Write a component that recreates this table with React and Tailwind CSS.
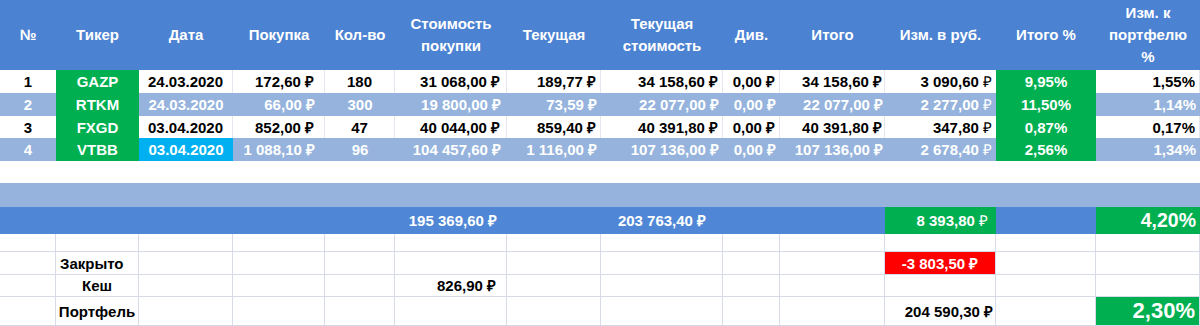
import React from 'react';

const grid =
  'grid grid-cols-[56px_83px_94px_92px_70px_112px_94px_122px_57px_105px_111px_100px_104px]';

const headers = [
  '№',
  'Тикер',
  'Дата',
  'Покупка',
  'Кол-во',
  'Стоимость\nпокупки',
  'Текущая',
  'Текущая\nстоимость',
  'Див.',
  'Итого',
  'Изм. в руб.',
  'Итого %',
  'Изм. к\nпортфелю\n%',
];

// alignment per column in the positions table
const align = [
  'justify-center',
  'justify-center',
  'justify-center',
  'justify-end pr-2.5',
  'justify-center',
  'justify-end pr-1.5',
  'justify-end pr-1',
  'justify-end pr-1',
  'justify-end pr-1',
  'justify-end pr-0.5',
  'justify-end pr-1',
  'justify-center',
  'justify-end pr-1',
];

const positions = [
  ['1', 'GAZP', '24.03.2020', '172,60 ₽', '180', '31 068,00 ₽', '189,77 ₽', '34 158,60 ₽', '0,00 ₽', '34 158,60 ₽', '3 090,60 ₽', '9,95%', '1,55%'],
  ['2', 'RTKM', '24.03.2020', '66,00 ₽', '300', '19 800,00 ₽', '73,59 ₽', '22 077,00 ₽', '0,00 ₽', '22 077,00 ₽', '2 277,00 ₽', '11,50%', '1,14%'],
  ['3', 'FXGD', '03.04.2020', '852,00 ₽', '47', '40 044,00 ₽', '859,40 ₽', '40 391,80 ₽', '0,00 ₽', '40 391,80 ₽', '347,80 ₽', '0,87%', '0,17%'],
  ['4', 'VTBB', '03.04.2020', '1 088,10 ₽', '96', '104 457,60 ₽', '1 116,00 ₽', '107 136,00 ₽', '0,00 ₽', '107 136,00 ₽', '2 678,40 ₽', '2,56%', '1,34%'],
];

const rowHeights = ['h-[23px]', 'h-[23px]', 'h-[22px]', 'h-[23px]'];

// ruble sign in the "Изм. в руб." column is drawn thinner
const ThinRub = ({ value }) => {
  const [num] = value.split(' ₽');
  return (
    <>
      {num}&nbsp;<span className="font-normal">₽</span>
    </>
  );
};

const PositionRow = ({ row, i }) => {
  const striped = i % 2 === 1;
  return (
    <div className={`${grid} ${rowHeights[i]} ${striped ? 'bg-[#95b3dc] text-white' : 'bg-white text-black'}`}>
      {row.map((val, c) => {
        let bg = '';
        if (c === 1 || c === 11) bg = 'bg-[#00b050] text-white';
        if (i === 3 && c === 2) bg = 'bg-[#00b0f0] text-white';
        const line = !striped && c !== 0 && c !== 1 && c !== 10 && c !== 11 ? 'border-r border-[#e3e6ee]' : '';
        return (
          <div key={c} className={`flex items-center whitespace-nowrap ${align[c]} ${bg} ${line}`}>
            {c === 10 ? <ThinRub value={val} /> : val}
          </div>
        );
      })}
    </div>
  );
};

const GridCell = ({ children, className = '' }) => (
  <div className={`flex items-center whitespace-nowrap border-r border-b border-[#d6dbe7] ${className}`}>
    {children}
  </div>
);

const BottomRow = ({ h, cells = {} }) => (
  <div className={`${grid} ${h} bg-white text-black`}>
    {headers.map((_, c) => (
      <GridCell key={c} className={cells[c]?.cls || ''}>
        {cells[c]?.text}
      </GridCell>
    ))}
  </div>
);

export default function App() {
  return (
    <div className="w-[1200px] h-[326px] overflow-hidden bg-white font-[family-name:Liberation_Sans,Arial,sans-serif] text-[15px] font-bold leading-none">
      <div className={`${grid} h-[70px] bg-[#4b82d2] text-white`}>
        {headers.map((h) => (
          <div key={h} className="flex items-center justify-center whitespace-pre-line text-center leading-[22px]">
            {h}
          </div>
        ))}
      </div>

      {positions.map((row, i) => (
        <PositionRow key={row[1]} row={row} i={i} />
      ))}

      <div className="h-[22px] bg-white" />
      <div className="h-[24px] bg-[#95b3dc]" />

      <div className={`${grid} h-[27px] bg-[#4f87d6] text-white`}>
        {headers.map((_, c) => {
          if (c === 5)
            return (
              <div key={c} className="flex items-center justify-end pr-2.5 whitespace-nowrap">
                195 369,60 ₽
              </div>
            );
          if (c === 7)
            return (
              <div key={c} className="flex items-center justify-center whitespace-nowrap">
                203 763,40 ₽
              </div>
            );
          if (c === 10)
            return (
              <div key={c} className="flex items-center justify-end pr-2 whitespace-nowrap bg-[#00b050]">
                <ThinRub value="8 393,80 ₽" />
              </div>
            );
          if (c === 12)
            return (
              <div key={c} className="flex items-center justify-end pr-1 text-[19.5px] bg-[#00b050]">
                4,20%
              </div>
            );
          return <div key={c} />;
        })}
      </div>

      <BottomRow h="h-[18px]" />
      <BottomRow
        h="h-[23px]"
        cells={{
          1: { text: 'Закрыто', cls: 'justify-start pl-1' },
          10: { text: '-3 803,50 ₽', cls: 'justify-center bg-[#ff0000] text-white' },
        }}
      />
      <BottomRow
        h="h-[22px]"
        cells={{
          1: { text: 'Кеш', cls: 'justify-center' },
          5: { text: '826,90 ₽', cls: 'justify-end pr-2.5' },
        }}
      />
      <BottomRow
        h="h-[29px]"
        cells={{
          1: { text: 'Портфель', cls: 'justify-center' },
          10: { text: '204 590,30 ₽', cls: 'justify-end pr-0.5' },
          12: { text: '2,30%', cls: 'justify-end pr-1 text-[22px] bg-[#00b050] text-white' },
        }}
      />
    </div>
  );
}
